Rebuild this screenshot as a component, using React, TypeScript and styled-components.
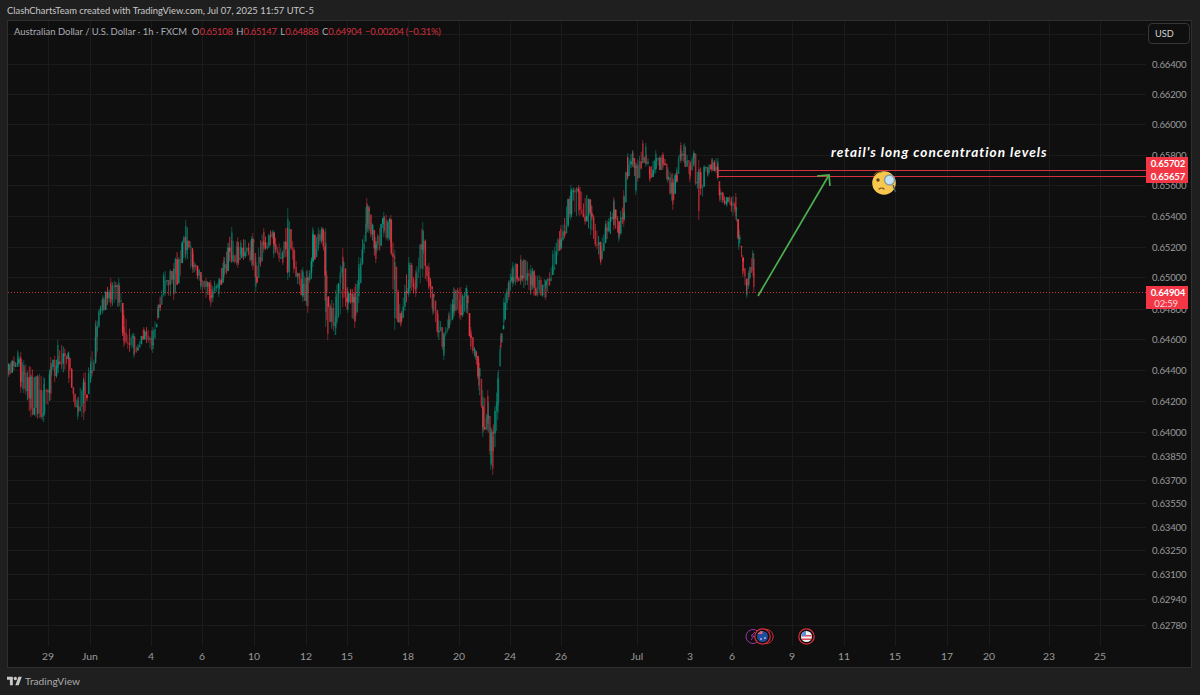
import styled, { createGlobalStyle } from 'styled-components';

const GlobalStyle = createGlobalStyle`
  html, body {
    margin: 0;
    padding: 0;
    background: #1f1f1f;
  }
  * {
    box-sizing: border-box;
  }
`;

const FONT = `Lato, 'Noto Sans', 'Liberation Sans', sans-serif`;

const Page = styled.div`
  width: 1200px;
  height: 695px;
  display: flex;
  flex-direction: column;
  background: #1f1f1f;
  font-family: ${FONT};
  overflow: hidden;
`;

const Header = styled.div`
  height: 20px;
  padding-left: 7px;
  font-size: 9.4px;
  line-height: 22px;
  color: #c8c8c8;
  white-space: nowrap;
`;

const Frame = styled.div`
  margin-left: 7px;
  width: 1185px;
  height: 648px;
  border: 1px solid #2f2f2f;
  background: #0f0f0f;
  display: grid;
  grid-template-columns: 1138px 1fr;
  grid-template-rows: 625px 1fr;
`;

const ChartPane = styled.div`
  position: relative;
`;

const ChartSvg = styled.svg`
  display: block;
`;

const Legend = styled.div`
  position: absolute;
  left: 6px;
  top: 4px;
  font-size: 9.45px;
  line-height: 14px;
  color: #a9acb3;
  white-space: nowrap;
`;

const Value = styled.span`
  color: #d22f3e;
  letter-spacing: -0.25px;
  margin-right: 3.5px;
`;

const Note = styled.div`
  position: absolute;
  left: 823px;
  top: 122px;
  font-size: 13.6px;
  line-height: 18px;
  font-weight: 700;
  font-style: italic;
  letter-spacing: 1px;
  color: #ffffff;
  white-space: nowrap;
`;

const PriceAxis = styled.div`
  position: relative;
  grid-row: 1 / span 2;
  grid-column: 2;
`;

const UsdButton = styled.div`
  position: absolute;
  left: 2px;
  top: 2px;
  width: 42px;
  height: 21px;
  padding-left: 6px;
  border: 1px solid #363636;
  border-radius: 4px;
  font-size: 9.2px;
  line-height: 19px;
  color: #d4d4d4;
`;

const PriceTick = styled.div`
  position: absolute;
  left: 6px;
  font-size: 9.6px;
  line-height: 12px;
  letter-spacing: -0.2px;
  color: #9a9a9a;
`;

const PriceTag = styled.div<{ $tall?: boolean }>`
  position: absolute;
  left: 0;
  width: 42px;
  height: ${(p) => (p.$tall ? 23 : 13)}px;
  padding: 1px 3px 0 0;
  background: #f23645;
  color: #ffffff;
  font-size: 9.6px;
  font-weight: 700;
  letter-spacing: -0.2px;
  line-height: 12px;
  text-align: right;
`;

const Countdown = styled.div`
  font-weight: 400;
  line-height: 10px;
  padding-right: 7px;
  color: #ffd9dc;
`;

const TimeAxis = styled.div`
  position: relative;
  grid-row: 2;
  grid-column: 1;
`;

const TimeTick = styled.div`
  position: absolute;
  top: 4px;
  transform: translateX(-50%);
  font-size: 10.4px;
  line-height: 13px;
  color: #9a9a9a;
`;

const Footer = styled.div`
  flex: 1;
  padding: 7px 0 0 7px;
  display: flex;
  align-items: flex-start;
  gap: 3px;
  font-size: 10.2px;
  line-height: 13px;
  color: #ababab;
`;

const prices: [string, number][] = [
  ['0.66400', 64],
  ['0.66200', 94],
  ['0.66000', 124],
  ['0.65800', 155],
  ['0.65600', 185],
  ['0.65400', 216],
  ['0.65200', 247],
  ['0.65000', 277],
  ['0.64800', 309],
  ['0.64600', 339],
  ['0.64400', 370],
  ['0.64200', 401],
  ['0.64000', 432],
  ['0.63850', 456],
  ['0.63700', 480],
  ['0.63550', 503],
  ['0.63400', 527],
  ['0.63250', 550],
  ['0.63100', 574],
  ['0.62940', 599],
  ['0.62780', 625],
];

const gridY = [34, ...prices.map((p) => p[1])];

const dates: [string, number][] = [
  ['29', 48],
  ['Jun', 90],
  ['4', 151],
  ['6', 202],
  ['10', 254],
  ['12', 306],
  ['15', 347],
  ['18', 408],
  ['20', 459],
  ['24', 510],
  ['26', 561],
  ['Jul', 637],
  ['3', 690],
  ['6', 732],
  ['9', 792],
  ['11', 844],
  ['15', 895],
  ['17', 947],
  ['20', 989],
  ['23', 1049],
  ['25', 1100],
];

// x, top of range, bottom of range, read off the reference
const path: [number, number, number][] = [
  [8, 363, 377], [17, 350, 367], [20, 352, 393], [23, 360, 393], [30, 367, 417], [43, 377, 422],
  [50, 357, 400], [57, 340, 373], [68, 352, 383], [77, 397, 420], [83, 373, 420], [90, 357, 383],
  [95, 320, 363], [102, 295, 313], [110, 278, 307], [118, 278, 307], [123, 310, 347], [133, 333, 358],
  [143, 327, 340], [152, 327, 353], [157, 307, 320], [163, 272, 297], [173, 263, 300], [185, 220, 260],
  [192, 250, 273], [200, 272, 290], [210, 280, 307], [218, 278, 297], [223, 257, 280], [231, 227, 263],
  [237, 237, 268], [240, 240, 257], [252, 233, 270], [255, 257, 292], [263, 228, 253], [273, 230, 258],
  [282, 250, 265], [287, 208, 280], [293, 247, 273], [302, 267, 302], [307, 270, 313], [312, 227, 267],
  [322, 227, 240], [325, 228, 327], [327, 297, 340], [335, 290, 335], [342, 248, 307], [347, 287, 313],
  [354, 287, 328], [358, 257, 303], [366, 198, 233], [368, 205, 233], [375, 237, 263], [383, 212, 237],
  [390, 215, 247], [394, 250, 330], [400, 313, 327], [408, 257, 297], [415, 270, 297], [422, 222, 277],
  [428, 263, 290], [432, 290, 315], [437, 310, 337], [443, 333, 360], [448, 313, 330], [453, 287, 317],
  [460, 287, 320], [466, 285, 313], [470, 327, 350], [475, 350, 360], [478, 358, 390], [482, 390, 437],
  [487, 390, 430], [490, 427, 470], [492, 430, 475], [497, 372, 420], [500, 333, 350], [503, 298, 327],
  [508, 280, 300], [512, 262, 287], [520, 255, 285], [530, 265, 295], [545, 280, 300], [552, 250, 275],
  [560, 225, 250], [570, 185, 220], [578, 185, 215], [590, 200, 235], [600, 243, 265], [605, 220, 243],
  [613, 197, 230], [618, 223, 242], [623, 190, 227], [627, 153, 180], [632, 150, 167], [635, 162, 195],
  [642, 140, 163], [645, 143, 167], [649, 167, 182], [655, 150, 173], [662, 152, 170], [667, 167, 183],
  [672, 173, 210], [676, 167, 183], [680, 142, 163], [684, 143, 167], [689, 163, 182], [693, 150, 167],
  [698, 160, 220], [707, 167, 177], [711, 158, 172], [717, 158, 180], [719, 187, 202], [726, 197, 207],
  [735, 193, 220], [738, 227, 250], [742, 255, 277], [746, 280, 298], [748, 270, 287], [752, 250, 270],
  [753, 253, 293],
];

const UP = '#089981';
const DOWN = '#f23645';

type Bar = {
  x: number;
  top: number;
  bottom: number;
  bodyTop: number;
  bodyH: number;
  color: string;
  dim: number;
};

let seed = 4711;
const rand = () => {
  seed = (seed * 16807) % 2147483647;
  return seed / 2147483647;
};

const rangeAt = (x: number): [number, number] => {
  let i = 0;
  while (i < path.length - 2 && path[i + 1][0] < x) i++;
  const [x0, h0, l0] = path[i];
  const [x1, h1, l1] = path[i + 1];
  const t = Math.min(1, Math.max(0, (x - x0) / (x1 - x0)));
  return [h0 + (h1 - h0) * t, l0 + (l1 - l0) * t];
};

const buildBars = (): Bar[] => {
  const bars: Bar[] = [];
  // the extremes have to be touched, these go underneath
  path.forEach(([x, hi, lo], i) => {
    bars.push({
      x,
      top: hi,
      bottom: lo,
      bodyTop: hi + (lo - hi) * 0.15,
      bodyH: (lo - hi) * 0.7,
      color: i % 2 ? UP : DOWN,
      dim: 0.6,
    });
  });
  let prev = 370;
  for (let x = 8; x <= 753; x += 1.7) {
    const [hi, lo] = rangeAt(x);
    const span = lo - hi;
    const open = Math.min(lo, Math.max(hi, prev));
    const close = hi + span * (0.05 + 0.9 * rand());
    const a = Math.min(open, close);
    const b = Math.max(open, close);
    bars.push({
      x,
      top: a - rand() * (a - hi),
      bottom: b + rand() * (lo - b),
      bodyTop: a,
      bodyH: Math.max(1.5, b - a),
      color: close < open ? UP : DOWN,
      dim: 0.55 + rand() * 0.45,
    });
    prev = close;
  }
  return bars;
};

const bars = buildBars();

const Candles = () => (
  <g>
    {bars.map((b, i) => (
      <g key={i} fill={b.color} opacity={b.dim}>
        <rect x={b.x + 0.4} y={b.top} width={0.8} height={b.bottom - b.top} />
        <rect x={b.x} y={b.bodyTop} width={1.6} height={b.bodyH} />
      </g>
    ))}
  </g>
);

const MonocleFace = () => (
  <g>
    <circle cx={884} cy={183} r={11.8} fill="#f8c84e" />
    <path d="M874 175q3-4 7-3" fill="none" stroke="#6b4a1e" strokeWidth={1.2} strokeLinecap="round" />
    <circle cx={878} cy={180} r={1.7} fill="#5b3f1c" />
    <path d="M879 189q3-2 5 0" fill="none" stroke="#6b4a1e" strokeWidth={1.2} strokeLinecap="round" />
    <line x1={893} y1={185} x2={895.5} y2={192} stroke="#3e5560" strokeWidth={1.4} />
    <circle cx={889.5} cy={180} r={5} fill="#c4e3f2" stroke="#8c9aa3" strokeWidth={1.5} />
  </g>
);

const EventIcons = () => (
  <g>
    <circle cx={753} cy={636.5} r={7} fill="#0f0f0f" stroke="#9c35a8" strokeWidth={1} />
    <path d="M755 632l-4 4h3l-3 4" fill="none" stroke="#9c35a8" strokeWidth={1} />
    <circle cx={766} cy={636.5} r={7.2} fill="#0f0f0f" stroke="#d52c3c" strokeWidth={1} />
    <circle cx={762.5} cy={636.5} r={7.7} fill="#0f0f0f" stroke="#e02f3f" strokeWidth={1.2} />
    <circle cx={762.5} cy={636.5} r={5.5} fill="#1f4c9c" />
    <path d="M757.5 634h5v-3h-2z" fill="#d96a75" />
    <circle cx={765} cy={638} r={0.8} fill="#fff" />
    <circle cx={761} cy={639} r={0.8} fill="#fff" />
    <circle cx={806.5} cy={636.5} r={7.7} fill="#0f0f0f" stroke="#e02f3f" strokeWidth={1.2} />
    <circle cx={806.5} cy={636.5} r={5.5} fill="#f2f2f2" />
    <path d="M801.5 635h10v1.5h-10zM802 638.5h9v1.5h-9z" fill="#dc4a55" />
    <path d="M801.6 636a5.5 5.5 0 0 1 4.4-5v5z" fill="#5b8fd6" />
  </g>
);

const TradingViewLogo = () => (
  <svg width="15" height="12" viewBox="0 0 36 28" fill="#c8c8c8" aria-hidden="true">
    <path d="M14 24H7V11H0V4h14v20zM28 24h-8l7.5-20h8L28 24z" />
    <circle cx="20" cy="8" r="4" />
  </svg>
);

export default function App() {
  return (
    <Page>
      <GlobalStyle />
      <Header>ClashChartsTeam created with TradingView.com, Jul 07, 2025 11:57 UTC-5</Header>
      <Frame>
        <ChartPane>
          <ChartSvg width={1138} height={625} viewBox="8 21 1138 625">
            {gridY.map((y) => (
              <line key={y} x1={8} x2={1146} y1={y + 0.5} y2={y + 0.5} stroke="#1b1b1b" />
            ))}
            {dates.map(([label, x]) => (
              <line key={label + x} x1={x + 0.5} x2={x + 0.5} y1={21} y2={646} stroke="#1b1b1b" />
            ))}
            <Candles />
            <line x1={8} x2={1146} y1={292.5} y2={292.5} stroke="#f23645" strokeDasharray="1 2" opacity={0.8} />
            <line x1={717} x2={1146} y1={170.5} y2={170.5} stroke="#d9303e" />
            <line x1={717} x2={1146} y1={176.5} y2={176.5} stroke="#d9303e" />
            <g fill="none" stroke="#4caf50" strokeWidth={1.7}>
              <line x1={758} y1={296} x2={829} y2={175} />
              <path d="M817 176l12-1 1 11" />
            </g>
            <MonocleFace />
            <EventIcons />
          </ChartSvg>
          <Legend>
            Australian Dollar / U.S. Dollar · 1h · FXCM&nbsp; O<Value>0.65108</Value>H<Value>0.65147</Value>L
            <Value>0.64888</Value>C<Value>0.64904</Value>
            <Value>−0.00204 (−0.31%)</Value>
          </Legend>
          <Note>retail's long concentration levels</Note>
        </ChartPane>
        <PriceAxis>
          <UsdButton>USD</UsdButton>
          {prices.map(([label, y]) => (
            <PriceTick key={label} style={{ top: y - 26 }}>
              {label}
            </PriceTick>
          ))}
          <PriceTag style={{ top: 136 }}>0.65702</PriceTag>
          <PriceTag style={{ top: 149 }}>0.65657</PriceTag>
          <PriceTag $tall style={{ top: 265 }}>
            0.64904
            <Countdown>02:59</Countdown>
          </PriceTag>
        </PriceAxis>
        <TimeAxis>
          {dates.map(([label, x]) => (
            <TimeTick key={label + x} style={{ left: x - 8 }}>
              {label}
            </TimeTick>
          ))}
        </TimeAxis>
      </Frame>
      <Footer>
        <TradingViewLogo />
        TradingView
      </Footer>
    </Page>
  );
}
